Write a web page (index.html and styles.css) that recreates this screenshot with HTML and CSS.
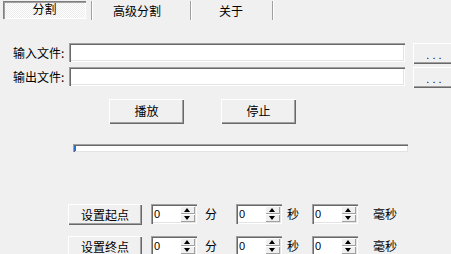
FILE: index.html
```html
<!DOCTYPE html>
<html>
<head>
<meta charset="utf-8">
<link rel="stylesheet" href="styles.css">
</head>
<body>
<div class="win">
  <div class="tabs">
    <div class="tab sel">分割</div>
    <div class="tab t2">高级分割</div>
    <div class="tab t3">关于</div>
  </div>

  <div class="files">
    <div class="frow">
      <span class="lbl">输入文件:</span>
      <div class="edit"></div>
      <div class="btn dots">. . .</div>
    </div>
    <div class="frow">
      <span class="lbl">输出文件:</span>
      <div class="edit"></div>
      <div class="btn dots">. . .</div>
    </div>
  </div>

  <div class="ctrl">
    <div class="btn big">播放</div>
    <div class="btn big">停止</div>
  </div>

  <div class="track"><span class="thumb"></span></div>

  <div class="times">
    <div class="trow">
      <div class="btn set">设置起点</div>
      <div class="spin"><span class="val">0</span><div class="arrows"><span class="up"></span><span class="dn"></span></div></div>
      <span class="unit">分</span>
      <div class="spin"><span class="val">0</span><div class="arrows"><span class="up"></span><span class="dn"></span></div></div>
      <span class="unit u2">秒</span>
      <div class="spin"><span class="val">0</span><div class="arrows"><span class="up"></span><span class="dn"></span></div></div>
      <span class="unit u3">毫秒</span>
    </div>
    <div class="trow">
      <div class="btn set">设置终点</div>
      <div class="spin"><span class="val">0</span><div class="arrows"><span class="up"></span><span class="dn"></span></div></div>
      <span class="unit">分</span>
      <div class="spin"><span class="val">0</span><div class="arrows"><span class="up"></span><span class="dn"></span></div></div>
      <span class="unit u2">秒</span>
      <div class="spin"><span class="val">0</span><div class="arrows"><span class="up"></span><span class="dn"></span></div></div>
      <span class="unit u3">毫秒</span>
    </div>
  </div>
</div>
</body>
</html>
```

FILE: styles.css
```css
html, body {
  margin: 0;
  padding: 0;
  background: #f0f0f0;
  overflow: hidden;
}
body {
  width: 451px;
  height: 254px;
  font-family: "Noto Sans CJK SC", "Noto Sans", sans-serif;
  font-size: 12px;
  color: #000;
}
.win {
  display: flex;
  flex-direction: column;
}

/* tabs */
.tabs {
  display: flex;
  height: 19px;
  padding-top: 1px;
}
.tab {
  height: 19px;
  line-height: 19px;
  box-sizing: border-box;
  border-right: 1px solid #a0a0a0;
  box-shadow: 1px 0 0 #fff;
  flex-shrink: 0;
}
.tab.sel {
  margin-left: 3px;
  width: 83px;
  height: 18px;
  line-height: 16px;
  text-align: center;
  border: none;
  box-shadow: inset 1px 1px #808080, inset 2px 2px #a0a0a0, inset -1px -1px #fff;
  background: repeating-conic-gradient(#ffffff 0 25%, #ececec 0 50%) 0 0 / 2px 2px;
  margin-right: 5px;
  position: relative;
}
.tabs .sel::after {
  content: "";
  position: absolute;
  right: -6px;
  top: 0;
  width: 1px;
  height: 19px;
  background: #a0a0a0;
  box-shadow: 1px 0 0 #fff;
}
.tab.t2 {
  width: 100px;
  padding-left: 22px;
}
.tab.t3 {
  width: 82px;
  padding-left: 28px;
}

/* file rows */
.files {
  margin-top: 23px;
  display: flex;
  flex-direction: column;
  gap: 3px;
}
.frow {
  display: flex;
  align-items: flex-start;
  height: 21px;
  padding-left: 13px;
}
.lbl {
  width: 56px;
  height: 19px;
  line-height: 19px;
  white-space: nowrap;
  flex-shrink: 0;
}
.edit {
  width: 336px;
  height: 19px;
  flex-shrink: 0;
  background: #fff;
  box-sizing: border-box;
  box-shadow: inset 1px 1px #a0a0a0, inset 2px 2px #696969, inset -1px -1px #fff, inset -2px -2px #e3e3e3;
}
.btn {
  box-sizing: border-box;
  background: #f0f0f0;
  text-align: center;
  box-shadow: inset 1px 1px #fff, inset -1px -1px #696969, inset -2px -2px #a0a0a0;
  white-space: nowrap;
  flex-shrink: 0;
}
.dots {
  margin-left: 8px;
  width: 42px;
  height: 21px;
  line-height: 24px;
  font-family: "Liberation Sans", sans-serif;
  font-size: 11px;
}

/* play/stop */
.ctrl {
  display: flex;
  gap: 37px;
  padding-left: 109px;
  margin-top: 11px;
}
.big {
  width: 75px;
  height: 25px;
  line-height: 24px;
}

/* track */
.track {
  margin: 20px 0 0 73px;
  width: 335px;
  height: 8px;
  box-sizing: border-box;
  background: #fff;
  box-shadow: inset 1px 1px #a0a0a0, inset 2px 2px #696969, inset -1px -1px #e3e3e3;
  position: relative;
}
.thumb {
  position: absolute;
  left: 1px;
  top: 2px;
  width: 2px;
  height: 5px;
  background: #2a6fd0;
}

/* times */
.times {
  margin-top: 52px;
  display: flex;
  flex-direction: column;
  gap: 11px;
}
.trow {
  display: flex;
  align-items: flex-start;
  padding-left: 68px;
  height: 21px;
}
.set {
  width: 74px;
  height: 21px;
  line-height: 21px;
  margin-right: 9px;
}
.spin {
  width: 46px;
  height: 20px;
  flex-shrink: 0;
  box-sizing: border-box;
  background: #fff;
  box-shadow: inset 1px 1px #a0a0a0, inset 2px 2px #696969, inset -1px -1px #fff, inset -2px -2px #e3e3e3;
  display: flex;
  align-items: center;
  padding: 2px 2px 2px 3px;
}
.val {
  flex: 1;
  font-family: "Liberation Sans", sans-serif;
  font-size: 11px;
  line-height: 16px;
}
.arrows {
  width: 15px;
  height: 16px;
  display: flex;
  flex-direction: column;
}
.arrows span {
  flex: 1;
  background: #f0f0f0;
  box-shadow: inset 1px 1px #fff, inset -1px -1px #a0a0a0;
  position: relative;
}
.arrows span::after {
  content: "";
  position: absolute;
  left: 4px;
  width: 0;
  height: 0;
  border-left: 3.5px solid transparent;
  border-right: 3.5px solid transparent;
}
.arrows .up::after {
  top: 2px;
  border-bottom: 4px solid #000;
}
.arrows .dn::after {
  top: 2px;
  border-top: 4px solid #000;
}
.unit {
  line-height: 20px;
  margin-left: 8px;
  width: 31px;
  flex-shrink: 0;
}
.unit.u2 {
  margin-left: 5px;
  width: 25px;
}
.unit.u3 {
  margin-left: 15px;
}
```
